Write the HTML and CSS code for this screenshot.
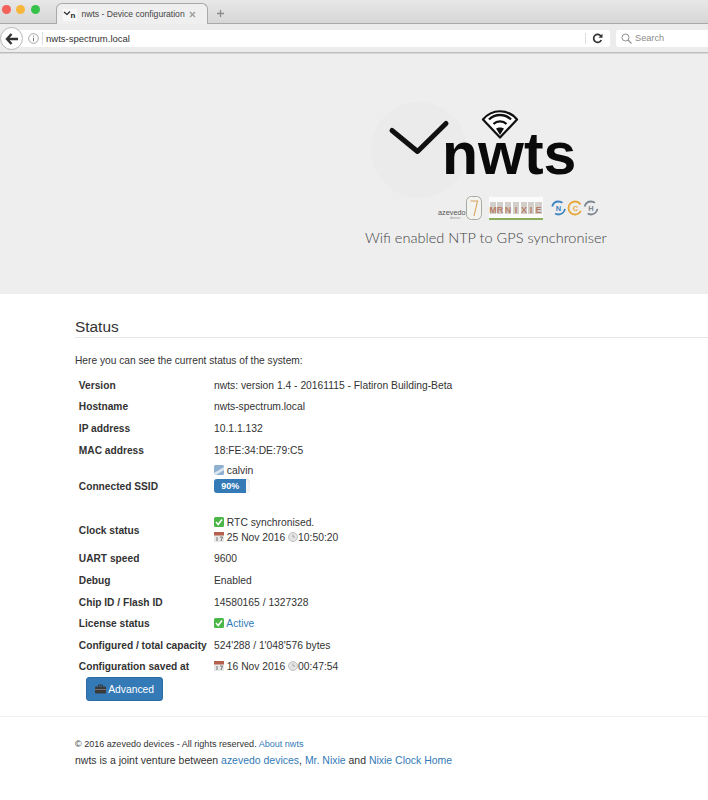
FILE: index.html
```html
<!DOCTYPE html>
<html lang="en">
<head>
<meta charset="utf-8">
<title>nwts - Device configuration</title>
<link rel="stylesheet" href="styles.css">
</head>
<body>
<header class="browser">
  <div class="tabbar">
    <div class="lights"><i class="light red"></i><i class="light amber"></i><i class="light green"></i></div>
    <div class="tab">
      <svg class="favicon" width="14" height="12" viewBox="0 0 14 12"><path d="M1 3l3 2.500L7 2.500" fill="none" stroke="#222" stroke-width="1.100"/><text x="7.500" y="9" class="favtext">n</text></svg>
      <span class="tabtitle">nwts - Device configuration</span>
      <svg class="tabclose" width="7" height="7" viewBox="0 0 7 7"><path d="M1 1l5 5M6 1L1 6" stroke="#a2a2a2" stroke-width="1.600"/></svg>
    </div>
    <svg class="newtab" width="9" height="9" viewBox="0 0 9 9"><path d="M4.500 1v7M1 4.500h7" stroke="#8a8a8a" stroke-width="1.300"/></svg>
  </div>
  <div class="toolbar">
    <div class="back"><svg width="14" height="12" viewBox="0 0 14 12"><path d="M6.500 1L2 6l4.500 5M2.500 6H13" fill="none" stroke="#333" stroke-width="2.400"/></svg></div>
    <div class="urlbar">
      <svg class="info" width="11" height="11" viewBox="0 0 11 11"><circle cx="5.500" cy="5.500" r="4.800" fill="none" stroke="#8d8d8d" stroke-width=".8"/><path d="M5.500 4.800v3.400M5.500 2.700v1" stroke="#777" stroke-width="1"/></svg>
      <span class="url">nwts-spectrum.local</span>
      <svg class="reload" width="11" height="11" viewBox="0 0 11 11"><path d="M9 3.200A4 4 0 1 0 9.300 7" fill="none" stroke="#333" stroke-width="1.700"/><path d="M10.500 0.800v4h-4z" fill="#333"/></svg>
    </div>
    <div class="search">
      <svg width="11" height="11" viewBox="0 0 11 11"><circle cx="4.500" cy="4.500" r="3.500" fill="none" stroke="#8f8f8f"/><path d="M7 7l3.500 3.500" stroke="#8f8f8f" stroke-width="1.100"/></svg>
      <span class="searchtext">Search</span>
    </div>
  </div>
</header>

<section class="hero">
  <svg class="logo" width="215" height="98" viewBox="0 0 215 98">
    <circle cx="49" cy="48" r="48" fill="#ebebeb"/>
    <path d="M22 28.500L47.500 49.500 76 21.500" fill="none" stroke="#111" stroke-width="5" stroke-linecap="round" stroke-linejoin="round"/>
    <path d="M130 35.500L113 17.500C122 6.500 138 6.500 147 17.500z" fill="#fff" stroke="#111" stroke-width="2.200" stroke-linejoin="round"/>
    <path d="M119 17.500C125 11.500 135 11.500 141 17.500M123.500 22C127 18.500 133 18.500 136.500 22" fill="none" stroke="#111" stroke-width="2.400"/>
    <path d="M130 33L126 26.500C128 25 132 25 134 26.500z" fill="#111"/>
    <text x="72" y="72" class="wordmark">nwts</text>
  </svg>
  <svg class="partners" width="166" height="28" viewBox="0 0 166 28">
    <text x="0" y="19" class="azevedo">azevedo</text>
    <text x="12" y="23" class="devices">devices</text>
    <rect x="28.500" y="0.500" width="15" height="23" rx="5" fill="#f3f3f0" stroke="#a8a8a0"/>
    <path d="M32.500 5h7l-3.500 15" fill="none" stroke="#d9a25f" stroke-width="1.100"/>
    <rect x="51" y="1" width="54" height="23" fill="#fbfbfb"/>
    <g fill="#d2cfcb">
      <rect x="52" y="6" width="6" height="12"/><rect x="59" y="6" width="6" height="12"/>
      <rect x="67" y="6" width="6" height="12"/><rect x="75" y="6" width="6" height="12"/><rect x="83" y="6" width="6" height="12"/><rect x="90" y="6" width="6" height="12"/><rect x="97" y="6" width="7" height="12"/>
    </g>
    <g class="nixie">
      <text x="55" y="17">M</text><text x="62" y="17">R</text>
      <text x="70" y="17">N</text><text x="78" y="17">I</text><text x="86" y="17">X</text><text x="93" y="17">I</text><text x="100.500" y="17">E</text>
    </g>
    <rect x="51" y="22" width="54" height="2" fill="#8aae5b"/>
    <g fill="none" stroke-width="1.800">
      <circle cx="120.500" cy="12" r="6.500" stroke="#3b83c0" stroke-dasharray="12.500 8" stroke-dashoffset="-1"/>
      <circle cx="137" cy="12" r="6.500" stroke="#e8a93c" stroke-dasharray="33 8" stroke-dashoffset="-3"/>
      <circle cx="153" cy="12" r="6.500" stroke="#7d8690" stroke-dasharray="12.500 8" stroke-dashoffset="-1"/>
    </g>
    <text x="120.500" y="15" class="badge n">N</text>
    <text x="137.500" y="15" class="badge c">C</text>
    <text x="153" y="15" class="badge h">H</text>
  </svg>
  <p class="tagline">Wifi enabled NTP to GPS synchroniser</p>
</section>

<main class="content">
  <h2 class="title">Status</h2>
  <p class="intro">Here you can see the current status of the system:</p>
  <table class="status">
    <tr><th>Version</th><td>nwts: version 1.4 - 20161115 - Flatiron Building-Beta</td></tr>
    <tr><th>Hostname</th><td>nwts-spectrum.local</td></tr>
    <tr><th>IP address</th><td>10.1.1.132</td></tr>
    <tr><th>MAC address</th><td>18:FE:34:DE:79:C5</td></tr>
    <tr class="ssid"><th>Connected SSID</th><td>
      <div class="line"><svg class="emoji" width="10" height="10" viewBox="0 0 10 10"><rect width="10" height="10" rx="1.500" fill="#8fb0d0"/><path d="M0 8L10 2v3L2 10H0z" fill="#dbe6f0"/></svg> calvin</div>
      <div class="progress"><div class="bar" style="width:90%">90%</div></div>
    </td></tr>
    <tr class="clock"><th>Clock status</th><td>
      <div class="line"><svg class="emoji" width="10" height="10" viewBox="0 0 10 10"><rect width="10" height="10" rx="1.500" fill="#4cb648"/><path d="M2 5l2.200 2.500L8 2.500" fill="none" stroke="#fff" stroke-width="1.500"/></svg> RTC synchronised.</div>
      <div class="line"><svg class="emoji" width="10" height="10" viewBox="0 0 10 10"><rect width="10" height="10" fill="#e8e8e8"/><rect width="10" height="3.500" fill="#b5604f"/><path d="M3 5v4M6 5h2.500L7 9" fill="none" stroke="#666" stroke-width=".9"/></svg> 25 Nov 2016 <svg class="emoji" width="10" height="10" viewBox="0 0 10 10"><circle cx="5" cy="5" r="4.500" fill="#e4e4e4" stroke="#b5b5b5" stroke-width=".8"/><path d="M5 2.500V5h2" fill="none" stroke="#999" stroke-width=".8"/></svg>10:50:20</div>
    </td></tr>
    <tr><th>UART speed</th><td>9600</td></tr>
    <tr><th>Debug</th><td>Enabled</td></tr>
    <tr><th>Chip ID / Flash ID</th><td>14580165 / 1327328</td></tr>
    <tr><th>License status</th><td><svg class="emoji" width="10" height="10" viewBox="0 0 10 10"><rect width="10" height="10" rx="1.500" fill="#4cb648"/><path d="M2 5l2.200 2.500L8 2.500" fill="none" stroke="#fff" stroke-width="1.500"/></svg> <a href="#">Active</a></td></tr>
    <tr><th>Configured / total capacity</th><td>524'288 / 1'048'576 bytes</td></tr>
    <tr><th>Configuration saved at</th><td><svg class="emoji" width="10" height="10" viewBox="0 0 10 10"><rect width="10" height="10" fill="#e8e8e8"/><rect width="10" height="3.500" fill="#b5604f"/><path d="M3 5v4M6 5h2.500L7 9" fill="none" stroke="#666" stroke-width=".9"/></svg> 16 Nov 2016 <svg class="emoji" width="10" height="10" viewBox="0 0 10 10"><circle cx="5" cy="5" r="4.500" fill="#e4e4e4" stroke="#b5b5b5" stroke-width=".8"/><path d="M5 2.500V5h2" fill="none" stroke="#999" stroke-width=".8"/></svg>00:47:54</td></tr>
  </table>
  <a class="btn" href="#"><svg width="11" height="10" viewBox="0 0 11 10"><path d="M3.500 2.500V1h4v1.500" fill="none" stroke="#333"/><rect y="2.500" width="11" height="7" rx="1" fill="#3a3a3a"/><rect y="5" width="11" height=".7" fill="#8a8a8a"/></svg> Advanced</a>
</main>

<footer class="footer">
  <p class="copy">© 2016 azevedo devices - All rights reserved. <a href="#">About nwts</a></p>
  <p class="joint">nwts is a joint venture between <a href="#">azevedo devices</a>, <a href="#">Mr. Nixie</a> and <a href="#">Nixie Clock Home</a></p>
</footer>
</body>
</html>
```

FILE: styles.css
```css
* { box-sizing: border-box; }
html, body { margin: 0; padding: 0; }
body {
  font-family: "Liberation Sans", Arial, sans-serif;
  font-size: 10.300px;
  line-height: 15.400px;
  color: #333;
  background: #fff;
  overflow-x: hidden;
  height: 800px;
}
a { color: #337ab7; text-decoration: none; }

.browser { height: 54px; background: #d8d8d8; overflow: hidden; }
.tabbar {
  height: 24px;
  display: flex;
  align-items: flex-end;
  background: linear-gradient(#e8e8e8, #d6d6d6);
  border-bottom: 1px solid #a9a9a9;
}
.lights { display: flex; gap: 5.500px; padding: 0 0 9px 1.500px; width: 56px; }
.light { width: 9px; height: 9px; border-radius: 50%; display: block; }
.red { background: #f4605a; }
.amber { background: #f6b73c; }
.green { background: #36c24a; }
.tab {
  width: 152px;
  height: 21px;
  margin-bottom: -1px;
  display: flex;
  align-items: center;
  gap: 4.500px;
  padding: 1px 12px 0 6px;
  background: #efefef;
  border: 1px solid #a9a9a9;
  border-bottom: 0;
  border-radius: 6px 6px 0 0;
}
.favicon { flex: none; background: #f8f8f8; }
.favtext { font: bold 8px "Liberation Sans", sans-serif; fill: #222; }
.tabtitle { font-size: 8.600px; color: #444; white-space: nowrap; flex: 1; }
.tabclose { flex: none; }
.newtab { margin: 0 0 5px 8px; }
.toolbar {
  height: 29px;
  display: flex;
  align-items: center;
  padding-top: 1px;
  background: #ececec;
  border-bottom: 1px solid #bdbdbd;
}
.back {
  width: 23px;
  height: 23px;
  border: 1px solid #b8b8b8;
  border-radius: 50%;
  background: #fdfdfd;
  display: flex;
  align-items: center;
  justify-content: center;
  flex: none;
  position: relative;
  z-index: 1;
}
.urlbar {
  width: 591px;
  height: 17px;
  margin-left: -4px;
  padding: 0 6px 0 9px;
  background: #fff;
  border-radius: 0 3px 3px 0;
  display: flex;
  align-items: center;
  flex: none;
}
.info { flex: none; margin-right: 3px; }
.url { flex: 1; font-size: 9.500px; color: #333; border-left: 1px solid #ddd; padding: 1px 0 0 3px; line-height: 12px; }
.reload { flex: none; box-sizing: content-box; padding-left: 6px; border-left: 1px solid #ddd; margin-right: 1px; }
.search {
  flex: 1;
  height: 17px;
  margin-left: 6px;
  background: #fff;
  border-radius: 3px 0 0 3px;
  display: flex;
  align-items: center;
  gap: 3px;
  padding-left: 5px;
  font-size: 9.200px;
  color: #8b8b8b;
}
.searchtext { padding-top: 1px; }

.hero {
  height: 240px;
  background: #eee;
  display: flex;
  flex-direction: column;
  align-items: flex-start;
  padding: 48px 0 0 370px;
}
.logo { display: block; flex: none; }
.wordmark { font: bold 59px "Liberation Sans", sans-serif; letter-spacing: 0; fill: #0a0a0a; }
.partners { display: block; flex: none; margin: -4px 0 0 68px; }
.azevedo { font: 7.300px "Liberation Sans", sans-serif; fill: #555; }
.devices { font: 3px "Liberation Sans", sans-serif; fill: #888; }
.nixie { font: bold 9px "Liberation Sans", sans-serif; fill: #b87f68; text-anchor: middle; }
.badge { font: bold 7.500px "Liberation Sans", sans-serif; text-anchor: middle; }
.n { fill: #3b83c0; }
.c { fill: #e8a93c; }
.h { fill: #7d8690; }
.tagline {
  margin: 4px 0 0 -5px;
  font-family: Lato, "Liberation Sans", sans-serif;
  font-weight: 300;
  font-size: 14.550px;
  line-height: 20px;
  color: #444;
  white-space: nowrap;
}

.content { padding: 0 0 0 75px; }
.title {
  margin: 24px 0 0;
  font-size: 15.400px;
  line-height: 18px;
  font-weight: 400;
  color: #333;
  padding-bottom: 1px;
  height: 20px;
  border-bottom: 1px solid #e6e6e6;
}
.intro { margin: 15px 0 0; font-size: 10.200px; }
.status { border-collapse: collapse; margin: 6.400px 0 0; }
.status th, .status td { padding: 3px 3.800px; height: 21.600px; text-align: left; vertical-align: middle; white-space: nowrap; }
.status th { font-size: 10.200px; font-weight: bold; width: 135.200px; padding-right: 0; }
.status .ssid th, .status .ssid td { height: 51px; padding-top: 0; padding-bottom: 0; }
.status .clock th, .status .clock td { height: 36.200px; padding-top: 0; padding-bottom: 0; }
.line { line-height: 15.400px; }
.clock .line { line-height: 15px; }
.emoji { display: inline-block; vertical-align: -1px; }
.progress { width: 36px; height: 14px; margin: 1px 0 17px; background: #f5f5f5; border-radius: 3px; overflow: hidden; box-shadow: inset 0 1px 2px rgba(0,0,0,.1); }
.bar { height: 14px; background: #337ab7; color: #fff; font-size: 9px; line-height: 14px; text-align: center; font-weight: bold; }
.btn {
  display: inline-block;
  margin: -1px 0 0 11px;
  height: 24px;
  width: 77px;
  padding-top: 4px;
  text-align: center;
  background: #337ab7;
  border: 1px solid #2e6da4;
  border-radius: 3px;
  color: #fff;
}
.btn svg { vertical-align: -1px; }

.footer { margin-top: 15px; border-top: 1px solid #f0f0f0; padding: 20px 0 0 75px; }
.copy { margin: 0; font-size: 9.050px; line-height: 14px; }
.joint { margin: 2px 0 0; font-size: 10.470px; line-height: 15px; }
```
